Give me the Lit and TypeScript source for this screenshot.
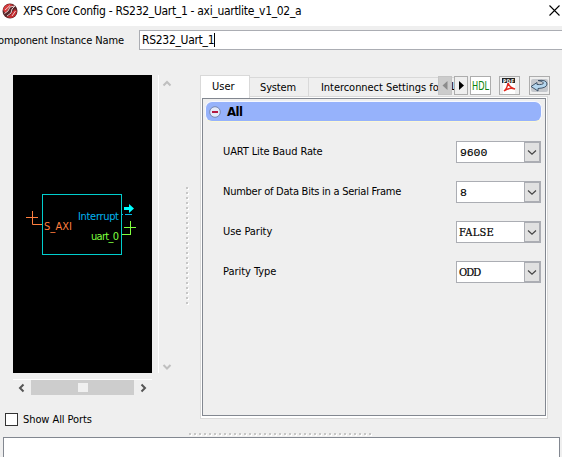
import { LitElement, html, svg, css } from "lit";
import { customElement, property } from "lit/decorators.js";

@customElement("combo-box")
class ComboBox extends LitElement {
  @property() value = "";
  static styles = css`
    :host { display: flex; box-sizing: border-box; width: 85px; height: 22px; border: 1px solid #abadb3; background: #fff; }
    .value { flex: 1; padding-left: 3px; font: 11.5px/22px "Liberation Mono", monospace; letter-spacing: -0.1px; color: #000; -webkit-text-stroke: 0.15px #000; }
    .slab { font: 11px/22px "DejaVu Serif Condensed", "DejaVu Serif", serif; letter-spacing: 0.3px; padding-left: 2px; -webkit-text-stroke: 0.2px #000; }
    .slab.ODD { letter-spacing: -0.9px; }
    .drop { box-sizing: border-box; width: 16px; height: 20px; border: 1px solid #abadb3; background: #e1e1e1; }
    svg { display: block; }
  `;
  render() {
    const slab = /[A-Z]/.test(this.value);
    return html`<span class="value ${slab ? "slab " + this.value : ""}">${this.value}</span>
      <span class="drop"><svg width="14" height="18"><path d="M3 7.5L7 11.200L11 7.500" fill="none" stroke="#444" stroke-width="1.200"/></svg></span>`;
  }
}

@customElement("port-diagram")
class PortDiagram extends LitElement {
  static styles = css`
    :host { display: block; width: 139px; height: 298px; background: #000; }
    svg { display: block; }
    text { font: 11px "DejaVu Sans Condensed", "DejaVu Sans", sans-serif; }
  `;
  render() {
    return html`<svg width="139" height="298">
      <rect x="29.5" y="119.5" width="79" height="60" fill="none" stroke="#00cdcd"/>
      <g stroke="#ff7f3f" fill="none"><path d="M13 142.5H25M19.5 136V149.5H29"/></g>
      <g stroke="#7fff3f" fill="none"><path d="M111 152.5H123M117.5 146V159.5M109 159.5H118"/></g>
      <path d="M109 139.500H110M112 139.500H119" stroke="#00b4e6"/>
      <path d="M111 132H116V129L121 133.500L116 138V135H111Z" fill="#00ffff"/>
      <text x="31" y="155" fill="#ff7f3f" textLength="28">S_AXI</text>
      <text x="65" y="145" fill="#00b4f0" textLength="41">Interrupt</text>
      <text x="78" y="165" fill="#7fff3f" textLength="28">uart_0</text>
    </svg>`;
  }
}

const fields = [
  ["UART Lite Baud Rate", "9600", "w1"],
  ["Number of Data Bits in a Serial Frame", "8", "w2"],
  ["Use Parity", "FALSE", "w3"],
  ["Parity Type", "ODD", "w4"],
];

const chevron = (d: string, color: string) =>
  html`<svg width="10" height="10"><path d=${d} fill="none" stroke=${color} stroke-width="2"/></svg>`;

@customElement("app-root")
class AppRoot extends LitElement {
  static styles = css`
    :host { display: flex; flex-direction: column; width: 562px; height: 457px; overflow: hidden; background: #efefef; color: #000; font: 11px/14px "DejaVu Sans Condensed", "DejaVu Sans", sans-serif; white-space: nowrap; }
    * { box-sizing: border-box; }
    svg { display: block; flex: none; }
    .title { display: flex; align-items: center; height: 26px; flex: none; background: #fff; padding: 0 3px 4px 2px; font-size: 12px; }
    .title span { flex: 1; margin-left: 5px; letter-spacing: -0.31px; }
    .title svg:last-child { margin-top: -2px; margin-right: -1px; }
    .name { display: flex; height: 49px; flex: none; padding-top: 4px; }
    .name label { width: 139px; flex: none; padding-right: 15px; display: flex; justify-content: flex-end; line-height: 21px; overflow: hidden; letter-spacing: -0.1px; }
    .name .input { width: 430px; flex: none; height: 20px; border: 1px solid #abadb3; background: #fff; padding-left: 2px; font-size: 12px; line-height: 19px; letter-spacing: -0.3px; display: flex; align-items: center; }
    .caret { width: 1px; height: 14px; background: #000; }
    .main { display: flex; height: 358px; flex: none; }
    .left { width: 158px; padding-left: 13px; }
    .hbar { display: flex; align-items: center; width: 139px; height: 17px; margin-top: 6px; border-top: 1px solid #fff; }
    .hbar .end { width: 18px; display: flex; padding-left: 4px; }
    .hbar .track { flex: 1; height: 15px; background: #cdcdcd; display: flex; align-items: center; justify-content: center; margin-bottom: 1px; }
    .hbar .thumb { width: 10px; height: 9px; background: #f0f0f0; }
    .check { display: flex; align-items: center; gap: 5px; margin: 17px 0 0 -8px; height: 13px; line-height: 15px; letter-spacing: -0.08px; }
    .box { width: 13px; height: 13px; border: 1px solid #333; background: #fff; }
    .vbar { width: 16px; height: 298px; border-left: 1px solid #fff; display: flex; flex-direction: column; justify-content: space-between; padding: 4px 0 1px 3px; }
    .vsplit { width: 26px; padding: 112px 0 0 12px; }
    .right { width: 348px; }
    .tabs { display: flex; height: 21px; position: relative; z-index: 1; }
    .tab { height: 20px; flex: none; margin-top: 2px; border: solid #d9d9d9; border-width: 1px 1px 0 0; line-height: 20px; }
    .tab.on { width: 50px; height: 23px; margin: 0; background: #fff; border-left-width: 1px; padding-left: 11px; line-height: 21px; }
    .tab.sys { width: 59px; padding-left: 10px; letter-spacing: -0.15px; }
    .tab.inter { width: 129px; border-right: 0; padding-left: 12px; overflow: hidden; letter-spacing: -0.05px; }
    .btn { border: 1px solid #adadad; height: 19px; margin-top: 1px; flex: none; background: #efefef; overflow: hidden; }
    .btn.prev { width: 14px; background: #ccc; border-color: #c4c4c4; }
    .sliver { width: 2px; flex: none; height: 18px; overflow: hidden; line-height: 18px; border-top: 1px solid #d9d9d9; margin-top: 2px; text-indent: -1px; }
    .btn.next { width: 14px; }
    .btn.hdl { width: 21px; margin-left: 2px; background: #fff; }
    .btn.pdf { width: 21px; margin-left: 8px; }
    .btn.open { width: 21px; margin-left: 9px; }
    .pane { height: 323px; border: 1px solid #d9d9d9; background: #fff; padding: 1px 1px 2px; }
    .inner { height: 100%; border: 1px solid #828790; background: #efefef; padding: 2px; }
    .head { display: flex; align-items: center; gap: 6px; width: 337px; height: 21px; padding-left: 3px; border-radius: 7px; border: 1px solid #f6f8ff; border-bottom-color: #fbf8d5; background: #96b2fb; font: bold 13px/19px "DejaVu Sans Condensed", "DejaVu Sans", sans-serif; letter-spacing: -0.5px; }
    .row { display: flex; align-items: center; justify-content: space-between; height: 22px; margin: 19px 2px 18px 18px; line-height: 16px; }
    .row + .row { margin-top: 0; }
    .w1 { letter-spacing: -0.12px; }
    .w2 { letter-spacing: -0.25px; }
    .w3, .w4 { letter-spacing: -0.05px; }
    .bottom { height: 24px; flex: none; padding: 0 1px 0 3px; }
    .bsplit { display: flex; height: 4px; padding-left: 186px; }
    .log { width: 557px; height: 24px; border: 1px solid #828790; border-bottom: 0; background: #fff; }
  `;

  dots(n: number, vertical: boolean) {
    return svg`${Array.from({ length: n }, (_, i) => {
      const x = vertical ? 0 : i * 5, y = vertical ? i * 5 : 0;
      return svg`<rect x=${x + 1} y=${y + 1} width="2" height="2" fill="#fff"/><rect x=${x} y=${y} width="2" height="2" fill="#c6c6c6"/>`;
    })}`;
  }

  render() {
    return html`
      <div class="title">
        <svg width="16" height="16" viewBox="0 0 16 16">
          <circle cx="8" cy="8" r="7.5" fill="#55282b"/>
          <path d="M1 7Q2 2 7 1L12 2Q7 3 6 7L3 10Z" fill="#d93b3d"/>
          <path d="M15 8Q14 14 9 15L4 14Q9 13 10 9L13 6Z" fill="#c92b30"/>
          <path d="M3 7L8 2.500M2.500 10.500L6 8L8 4L13 3L10 6L9 10L5 13M10 13L13.500 8" fill="none" stroke="#e8cccc" stroke-width="1"/>
        </svg>
        <span>XPS Core Config - RS232_Uart_1 - axi_uartlite_v1_02_a</span>
        <svg width="11" height="11"><path d="M.5 .5L10.5 10.5M10.5 .5L.5 10.5" stroke="#000" stroke-width="1.1"/></svg>
      </div>
      <div class="name">
        <label>Component Instance Name</label>
        <div class="input">RS232_Uart_1<i class="caret"></i></div>
      </div>
      <div class="main">
        <div class="left">
          <port-diagram></port-diagram>
          <div class="hbar">
            <span class="end">${chevron("M6.5 1.5L3 5L6.5 8.5", "#555")}</span>
            <span class="track"><i class="thumb"></i></span>
            <span class="end">${chevron("M3.5 1.5L7 5L3.5 8.5", "#555")}</span>
          </div>
          <div class="check"><i class="box"></i>Show All Ports</div>
        </div>
        <div class="vbar">${chevron("M1.5 6.5L5 3L8.5 6.5", "#bfbfbf")}${chevron("M1.5 3L5 6.5L8.5 3", "#bfbfbf")}</div>
        <div class="vsplit"><svg width="3" height="118">${this.dots(24, true)}</svg></div>
        <div class="right">
          <div class="tabs">
            <div class="tab on">User</div>
            <div class="tab sys">System</div>
            <div class="tab inter">Interconnect Settings for BUSIF</div>
            <div class="btn prev"><svg width="12" height="17"><path d="M8.500 4V13L3.500 8.500Z" fill="#8c8c8c"/></svg></div>
            <div class="sliver">L</div>
            <div class="btn next"><svg width="12" height="17"><path d="M4 4V13L9 8.500Z" fill="#000"/></svg></div>
            <div class="btn hdl"><svg width="19" height="17"><text x="1" y="13" font-size="13" fill="#078207" textLength="17" lengthAdjust="spacingAndGlyphs">HDL</text></svg></div>
            <div class="btn pdf"><svg width="19" height="17">
              <rect x="3" y="3" width="12" height="14" fill="#fff"/><rect x="2" y="1" width="13" height="5" fill="#222"/>
              <text x="3" y="5.500" font-size="5" font-weight="bold" fill="#fff" textLength="11">PDF</text>
              <path d="M8 6Q10 11 15 12Q9 10 4 14Q7 12 8 6" fill="none" stroke="#e12a20" stroke-width="1.500"/>
            </svg></div>
            <div class="btn open"><svg width="19" height="17">
              <rect x="1" y="2" width="17" height="13" rx="2" fill="#c5c8cd"/>
              <path d="M1 9.500L7 5.500V7.500Q13 8 13.500 6Q13 4 8 3.500Q17 2.500 17 7Q17 11 8 11.500V14Z" fill="#b5d6ee" stroke="#34485e" stroke-width="0.9"/>
            </svg></div>
          </div>
          <div class="pane"><div class="inner">
            <div class="head">
              <svg width="12" height="12"><circle cx="6" cy="6" r="5.300" fill="#e3e9fa" stroke="#7787b0"/><path d="M3 6H9" stroke="#b3173f" stroke-width="2"/></svg>All
            </div>
            ${fields.map(([label, value, w]) => html`<div class="row"><span class=${w}>${label}</span><combo-box .value=${value}></combo-box></div>`)}
          </div></div>
        </div>
      </div>
      <div class="bottom">
        <div class="bsplit"><svg width="184" height="3">${this.dots(37, false)}</svg></div>
        <div class="log"></div>
      </div>`;
  }
}
